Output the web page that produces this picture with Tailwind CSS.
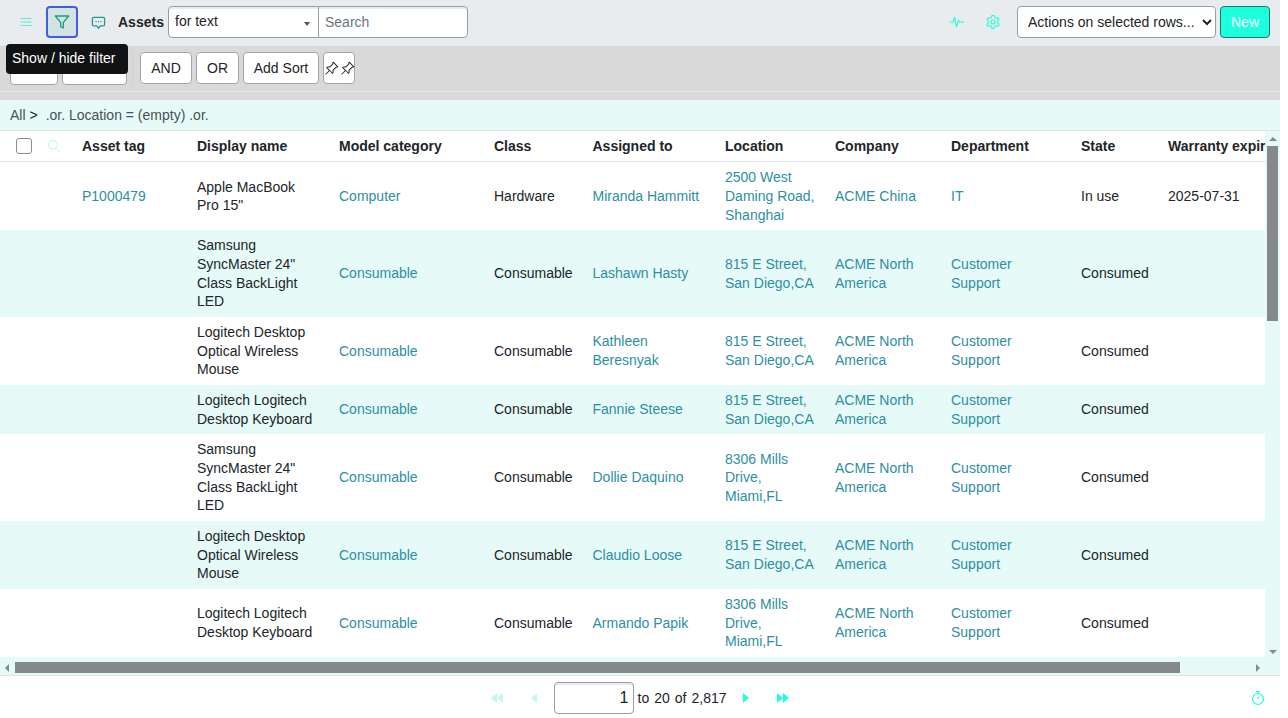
<!DOCTYPE html>
<html lang="en">
<head>
    <meta charset="UTF-8">
    <meta name="viewport" content="width=device-width, initial-scale=1.0">
    <title>Assets</title>
    <script src="https://cdn.jsdelivr.net/npm/@tailwindcss/browser@4"></script>
</head>
<body class="bg-white text-[14px] leading-[18.67px] text-[#212529] font-['Liberation_Sans',Arial,sans-serif] overflow-hidden">
<div class="relative flex flex-col w-[1280px] h-[718px] overflow-hidden">

    <!-- Top toolbar -->
    <div class="flex items-center h-[46px] pb-[2px] bg-[#e9ecef] shrink-0">
        <div class="flex justify-center w-[32px] ml-[10px]">
            <svg class="w-[16px] h-[16px] text-[#5fe9d6]" viewBox="0 0 16 16" fill="none" stroke="currentColor" stroke-width="1.2"><path d="M2.5 4.5h11M2.5 8h11M2.5 11.5h11"/></svg>
        </div>
        <button class="flex items-center justify-center w-[32px] h-[32px] ml-[4px] border-2 border-[#3f5fe0] rounded-[4px] bg-[#d3e3e1]">
            <svg class="w-[16px] h-[16px] text-[#1a9d8f]" viewBox="0 0 24 24" fill="none" stroke="currentColor" stroke-width="2" stroke-linejoin="round"><polygon points="22 3 2 3 10 12.46 10 19 14 21 14 12.46 22 3"/></svg>
        </button>
        <div class="flex justify-center w-[32px] ml-[4px]">
            <svg class="w-[15px] h-[15px] text-[#1a9d8f]" viewBox="0 0 16 16" fill="none" stroke="currentColor" stroke-width="1.4"><path d="M3 2.5h10a1.5 1.5 0 0 1 1.5 1.5v6a1.5 1.5 0 0 1-1.5 1.5h-3L8 14l-2-2.500H3A1.500 1.500 0 0 1 1.500 10V4A1.500 1.500 0 0 1 3 2.500z"/><path d="M4.800 7h1.200M7.400 7h1.200M10 7h1.200"/></svg>
        </div>
        <span class="ml-[4px] font-bold w-[50px]">Assets</span>
        <div class="flex items-stretch h-[32px] w-[300px]">
            <div class="relative w-[151px] bg-white border border-[#9a9da3] rounded-l-[4px] pl-[6px] pt-[5px] shadow-[inset_0_2px_0_#e9ecef]">
                for text
                <span class="absolute right-[8px] top-[15px] w-0 h-0 border-x-[3.5px] border-x-transparent border-t-[4px] border-t-[#555]"></span>
            </div>
            <input type="text" placeholder="Search" class="w-[150px] -ml-px bg-white border border-[#9a9da3] rounded-r-[4px] pl-[6px] placeholder:text-[#6c757d] shadow-[inset_0_2px_0_#e9ecef]">
        </div>
        <div class="flex items-center ml-auto">
            <svg class="w-[16px] h-[16px] text-[#1dffdd] mr-[20px]" viewBox="0 0 16 16" fill="none" stroke="currentColor" stroke-width="1.100"><path d="M.5 8h3.500l1.500-5 2 10 2-6.500 1 1.500h4.500"/></svg>
            <svg class="w-[16px] h-[16px] text-[#1dffdd] mr-[16px]" viewBox="0 0 24 24" fill="none" stroke="currentColor" stroke-width="1.700"><path d="M12.220 2h-.44a2 2 0 0 0-2 2v.18a2 2 0 0 1-1 1.730l-.43.25a2 2 0 0 1-2 0l-.15-.08a2 2 0 0 0-2.730.73l-.22.38a2 2 0 0 0 .73 2.730l.15.1a2 2 0 0 1 1 1.720v.51a2 2 0 0 1-1 1.740l-.15.09a2 2 0 0 0-.73 2.730l.22.38a2 2 0 0 0 2.730.73l.15-.08a2 2 0 0 1 2 0l.43.25a2 2 0 0 1 1 1.730V20a2 2 0 0 0 2 2h.44a2 2 0 0 0 2-2v-.18a2 2 0 0 1 1-1.730l.43-.25a2 2 0 0 1 2 0l.15.08a2 2 0 0 0 2.730-.73l.22-.39a2 2 0 0 0-.73-2.730l-.15-.08a2 2 0 0 1-1-1.740v-.5a2 2 0 0 1 1-1.740l.15-.09a2 2 0 0 0 .73-2.730l-.22-.38a2 2 0 0 0-2.730-.73l-.15.08a2 2 0 0 1-2 0l-.43-.25a2 2 0 0 1-1-1.730V4a2 2 0 0 0-2-2z"/><circle cx="12" cy="12" r="3"/></svg>
            <select class="w-[199px] h-[32px] bg-white border border-[#9a9da3] rounded-[4px] pl-[6px]">
                <option>Actions on selected rows...</option>
            </select>
            <button class="w-[50px] h-[32px] ml-[4px] mr-[10px] bg-[#1dffdd] border border-[#1a7a6e] rounded-[4px] text-white">New</button>
        </div>
    </div>

    <!-- Filter bar -->
    <div class="h-[54px] bg-[#d9d9d9] shrink-0 pt-[6px]">
        <div class="flex items-start h-[40px] border-b border-[#e6e6e6] pl-[10px]">
            <button class="w-[48px] h-[33px] bg-white border border-[#a5a5a5] rounded-[4px]"></button>
            <button class="w-[65px] h-[33px] ml-[4px] bg-white border border-[#a5a5a5] rounded-[4px]"></button>
            <span class="w-px h-[32px] ml-[5px] mr-[7px] bg-[#d0d0d0]"></span>
            <button class="w-[52px] h-[32px] bg-white border border-[#a5a5a5] rounded-[4px]">AND</button>
            <button class="w-[43px] h-[32px] ml-[4px] bg-white border border-[#a5a5a5] rounded-[4px]">OR</button>
            <button class="w-[76px] h-[32px] ml-[4px] bg-white border border-[#a5a5a5] rounded-[4px]">Add Sort</button>
            <button class="flex items-center justify-center gap-[1px] w-[32px] h-[32px] ml-[4px] bg-white border border-[#a5a5a5] rounded-[4px]">
                <svg class="w-[15px] h-[15px] shrink-0" viewBox="0 0 16 16" fill="currentColor"><path d="M9.828.722a.5.5 0 0 1 .354.146l4.95 4.95a.5.5 0 0 1 0 .707c-.48.48-1.072.588-1.503.588-.177 0-.335-.018-.46-.039l-3.134 3.134a5.927 5.927 0 0 1 .16 1.013c.046.702-.032 1.687-.72 2.375a.5.5 0 0 1-.707 0l-2.829-2.828-3.182 3.182c-.195.195-1.219.902-1.414.707-.195-.195.512-1.22.707-1.414l3.182-3.182-2.828-2.829a.5.5 0 0 1 0-.707c.688-.688 1.673-.767 2.375-.72a5.922 5.922 0 0 1 1.013.16l3.134-3.133a2.772 2.772 0 0 1-.04-.461c0-.43.108-1.022.589-1.503a.5.5 0 0 1 .353-.146zm.122 2.112v-.002.002zm0-.002v.002a.5.5 0 0 1-.122.51L6.293 6.878a.5.5 0 0 1-.511.12H5.78l-.014-.004a4.507 4.507 0 0 0-.288-.076 4.922 4.922 0 0 0-.765-.116c-.422-.028-.836.008-1.175.15l5.51 5.509c.141-.34.177-.753.149-1.175a4.924 4.924 0 0 0-.192-1.054l-.004-.013v-.001a.5.5 0 0 1 .12-.512l3.536-3.535a.5.5 0 0 1 .532-.115l.096.022c.087.017.208.034.344.034.114 0 .23-.011.343-.04L9.927 2.028c-.029.113-.04.23-.04.343a1.779 1.779 0 0 0 .062.46z"/></svg>
                <svg class="w-[15px] h-[15px] shrink-0" viewBox="0 0 16 16" fill="currentColor"><path d="M9.828.722a.5.5 0 0 1 .354.146l4.95 4.95a.5.5 0 0 1 0 .707c-.48.48-1.072.588-1.503.588-.177 0-.335-.018-.46-.039l-3.134 3.134a5.927 5.927 0 0 1 .16 1.013c.046.702-.032 1.687-.72 2.375a.5.5 0 0 1-.707 0l-2.829-2.828-3.182 3.182c-.195.195-1.219.902-1.414.707-.195-.195.512-1.22.707-1.414l3.182-3.182-2.828-2.829a.5.5 0 0 1 0-.707c.688-.688 1.673-.767 2.375-.72a5.922 5.922 0 0 1 1.013.16l3.134-3.133a2.772 2.772 0 0 1-.04-.461c0-.43.108-1.022.589-1.503a.5.5 0 0 1 .353-.146zm.122 2.112v-.002.002zm0-.002v.002a.5.5 0 0 1-.122.51L6.293 6.878a.5.5 0 0 1-.511.12H5.78l-.014-.004a4.507 4.507 0 0 0-.288-.076 4.922 4.922 0 0 0-.765-.116c-.422-.028-.836.008-1.175.15l5.51 5.509c.141-.34.177-.753.149-1.175a4.924 4.924 0 0 0-.192-1.054l-.004-.013v-.001a.5.5 0 0 1 .12-.512l3.536-3.535a.5.5 0 0 1 .532-.115l.096.022c.087.017.208.034.344.034.114 0 .23-.011.343-.04L9.927 2.028c-.029.113-.04.23-.04.343a1.779 1.779 0 0 0 .062.46z"/></svg>
            </button>
        </div>
    </div>

    <!-- Tooltip -->
    <div class="absolute left-[6px] top-[44px] w-[122px] h-[30px] pl-[6px] pt-[5px] bg-[#111214] text-white rounded-[4px]">Show / hide filter</div>

    <!-- Breadcrumb -->
    <div class="flex items-center h-[31px] pl-[10px] bg-[#e6faf7] border-b border-[#dfe3e3] text-[#495057] shrink-0">
        <span>All <span class="text-[#212529]">&gt;</span></span>
        <span class="ml-[8px]">.or. Location = (empty) .or.</span>
    </div>

    <!-- Table with scrollbars -->
    <div class="flex flex-1 min-h-0">
        <div class="flex-1 min-w-0 overflow-hidden">
            <table class="table-fixed w-[1300px] border-separate border-spacing-0">
                <colgroup>
                    <col class="w-[36px]"><col class="w-[36px]"><col class="w-[115px]"><col class="w-[142px]"><col class="w-[155px]"><col class="w-[98.5px]"><col class="w-[132.5px]"><col class="w-[110px]"><col class="w-[116px]"><col class="w-[130px]"><col class="w-[87px]"><col class="w-[142px]">
                </colgroup>
                <thead>
                    <tr class="h-[31px] text-left font-bold [&>th]:px-[10px] [&>th]:whitespace-nowrap [&>th]:overflow-hidden [&>th]:border-b [&>th]:border-[#e2e4e6]">
                        <th class="!pl-[16px] !pr-0"><span class="block w-[16px] h-[16px] border border-[#8a8d93] rounded-[3px] bg-white"></span></th>
                        <th class="!pl-[11px] !pr-0"><svg class="w-[14px] h-[14px] text-[#c5f8f0]" viewBox="0 0 16 16" fill="none" stroke="currentColor" stroke-width="1.300"><circle cx="6.500" cy="6.500" r="5"/><path d="M10.200 10.200L15 15"/></svg></th>
                        <th>Asset tag</th><th>Display name</th><th>Model category</th><th>Class</th><th>Assigned to</th><th>Location</th><th>Company</th><th>Department</th><th>State</th><th>Warranty expiration</th>
                    </tr>
                </thead>
                <tbody class="[&_td]:px-[10px] [&_td]:pt-[6.3px] [&_td]:pb-[5.7px] [&_a]:text-[#2e8fa3]">
                    <tr class="bg-white">
                        <td></td><td></td><td><a href="#">P1000479</a></td><td>Apple MacBook Pro 15"</td><td><a href="#">Computer</a></td><td>Hardware</td><td><a href="#">Miranda Hammitt</a></td><td><a href="#">2500 West Daming Road, Shanghai</a></td><td><a href="#">ACME China</a></td><td><a href="#">IT</a></td><td>In use</td><td>2025-07-31</td>
                    </tr>
                    <tr class="bg-[#e6faf7]">
                        <td></td><td></td><td></td><td>Samsung SyncMaster 24" Class BackLight LED</td><td><a href="#">Consumable</a></td><td>Consumable</td><td><a href="#">Lashawn Hasty</a></td><td><a href="#">815 E Street, San Diego,CA</a></td><td><a href="#">ACME North America</a></td><td><a href="#">Customer<br>Support</a></td><td>Consumed</td><td></td>
                    </tr>
                    <tr class="bg-white">
                        <td></td><td></td><td></td><td>Logitech Desktop Optical Wireless Mouse</td><td><a href="#">Consumable</a></td><td>Consumable</td><td><a href="#">Kathleen Beresnyak</a></td><td><a href="#">815 E Street, San Diego,CA</a></td><td><a href="#">ACME North America</a></td><td><a href="#">Customer<br>Support</a></td><td>Consumed</td><td></td>
                    </tr>
                    <tr class="bg-[#e6faf7]">
                        <td></td><td></td><td></td><td>Logitech Logitech Desktop Keyboard</td><td><a href="#">Consumable</a></td><td>Consumable</td><td><a href="#">Fannie Steese</a></td><td><a href="#">815 E Street, San Diego,CA</a></td><td><a href="#">ACME North America</a></td><td><a href="#">Customer<br>Support</a></td><td>Consumed</td><td></td>
                    </tr>
                    <tr class="bg-white">
                        <td></td><td></td><td></td><td>Samsung SyncMaster 24" Class BackLight LED</td><td><a href="#">Consumable</a></td><td>Consumable</td><td><a href="#">Dollie Daquino</a></td><td><a href="#">8306 Mills Drive, Miami,FL</a></td><td><a href="#">ACME North America</a></td><td><a href="#">Customer<br>Support</a></td><td>Consumed</td><td></td>
                    </tr>
                    <tr class="bg-[#e6faf7]">
                        <td></td><td></td><td></td><td>Logitech Desktop Optical Wireless Mouse</td><td><a href="#">Consumable</a></td><td>Consumable</td><td><a href="#">Claudio Loose</a></td><td><a href="#">815 E Street, San Diego,CA</a></td><td><a href="#">ACME North America</a></td><td><a href="#">Customer<br>Support</a></td><td>Consumed</td><td></td>
                    </tr>
                    <tr class="bg-white">
                        <td></td><td></td><td></td><td>Logitech Logitech Desktop Keyboard</td><td><a href="#">Consumable</a></td><td>Consumable</td><td><a href="#">Armando Papik</a></td><td><a href="#">8306 Mills Drive, Miami,FL</a></td><td><a href="#">ACME North America</a></td><td><a href="#">Customer<br>Support</a></td><td>Consumed</td><td></td>
                    </tr>
                </tbody>
            </table>
        </div>
        <!-- Vertical scrollbar -->
        <div class="flex flex-col items-center w-[15px] bg-[#e6faf7] shrink-0">
            <span class="mt-[6px] w-0 h-0 border-x-[4px] border-x-transparent border-b-[4px] border-b-[#85898b]"></span>
            <span class="mt-[5px] w-[11px] h-[175px] bg-[#85898b]"></span>
            <span class="mt-auto mb-[3px] w-0 h-0 border-x-[4px] border-x-transparent border-t-[4px] border-t-[#85898b]"></span>
        </div>
    </div>

    <!-- Horizontal scrollbar -->
    <div class="flex items-center h-[19px] pt-[3px] bg-[#e6faf7] border-b border-[#dfe3e3] shrink-0">
        <span class="ml-[5px] w-0 h-0 border-y-[4px] border-y-transparent border-r-[4px] border-r-[#85898b]"></span>
        <span class="ml-[6px] w-[1165px] h-[11px] bg-[#85898b]"></span>
        <span class="ml-[76px] w-0 h-0 border-y-[4px] border-y-transparent border-l-[4px] border-l-[#85898b]"></span>
    </div>

    <!-- Pagination -->
    <div class="relative flex items-center justify-center h-[42px] pt-[2px] pr-[1px] shrink-0">
        <svg class="w-[14px] h-[10px] text-[#c5f8f0]" viewBox="0 0 14 10" fill="currentColor"><path d="M7 0v10L1 5zM13 0v10L7 5z"/></svg>
        <svg class="w-[8px] h-[10px] ml-[26px] text-[#c5f8f0]" viewBox="0 0 8 10" fill="currentColor"><path d="M7 0v10L1 5z"/></svg>
        <input type="text" value="1" class="w-[80px] h-[32px] ml-[16px] pr-[4px] text-right text-[16px] bg-white border border-[#9a9da3] rounded-[4px] shadow-[inset_0_2px_0_#e9ecef]">
        <span class="ml-[4px]">to</span><span class="ml-[5px]">20</span><span class="ml-[5px]">of</span><span class="ml-[5px]">2,817</span>
        <svg class="w-[8px] h-[10px] ml-[15px] text-[#1dffdd]" viewBox="0 0 8 10" fill="currentColor"><path d="M1 0v10l6-5z"/></svg>
        <svg class="w-[14px] h-[10px] ml-[26px] text-[#1dffdd]" viewBox="0 0 14 10" fill="currentColor"><path d="M1 0v10l6-5zM7 0v10l6-5z"/></svg>
        <svg class="absolute right-[14px] top-[14px] w-[16px] h-[16px] text-[#1dffdd]" viewBox="0 0 16 16" fill="none" stroke="currentColor" stroke-width="1.200"><circle cx="8" cy="9" r="5.500"/><path d="M6 1.500h4M8 1.500v2M8 6.500V9"/></svg>
    </div>
</div>
</body>
</html>
